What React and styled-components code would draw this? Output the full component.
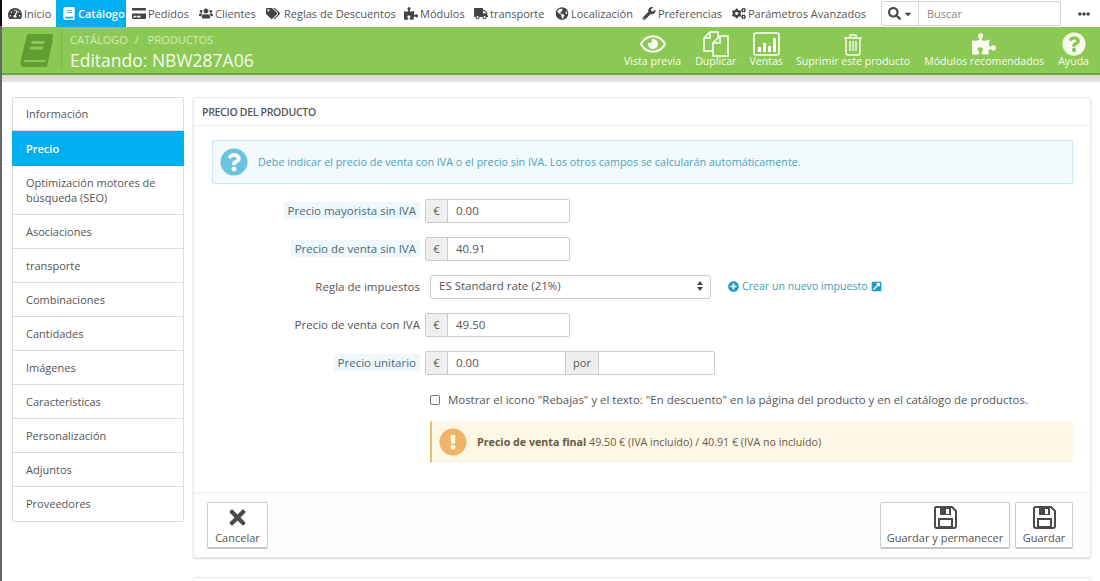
import React from "react";
import styled, { createGlobalStyle } from "styled-components";
import {
  FaTachometerAlt, FaBook, FaCreditCard, FaUsers, FaTags, FaPuzzlePiece, FaTruck, FaGlobeAmericas,
  FaWrench, FaCogs, FaSearch, FaCaretDown, FaEllipsisH, FaRegEye, FaQuestionCircle, FaTimes,
  FaPlusCircle, FaExternalLinkSquareAlt, FaExclamationCircle,
} from "react-icons/fa";

const GlobalStyle = createGlobalStyle`
  html, body { margin: 0; padding: 0; background: #fff; }
  body { font-family: "Open Sans", "Liberation Sans", sans-serif; font-size: 11px; color: #555; }
  * { box-sizing: border-box; }
`;

const Page = styled.div`
  width: 1100px;
  height: 581px;
  overflow: hidden;
  background: #fff;
  border-left: 2px solid #666;
  border-image: linear-gradient(#111 27px, #666 27px) 1;
`;

const TopBar = styled.nav`
  display: flex;
  align-items: stretch;
  height: 27px;
  padding-left: 6px;
  background: #fff;
`;

const NavItem = styled.a`
  display: flex;
  align-items: center;
  gap: ${(p) => p.$gap ?? 2}px;
  width: ${(p) => p.$w}px;
  margin-right: ${(p) => (p.$active ? 6 : 0)}px;
  padding-left: ${(p) => (p.$active ? 6 : 0)}px;
  font-size: 11px;
  white-space: nowrap;
  color: ${(p) => (p.$active ? "#fff" : "#555")};
  font-weight: ${(p) => (p.$active ? 600 : 400)};
  background: ${(p) => (p.$active ? "#00aff0" : "transparent")};
  svg { width: 14px; height: 13px; color: ${(p) => (p.$active ? "#fff" : "#444")}; flex: none; }
`;

const SearchBox = styled.div`
  display: flex;
  width: 180px;
  height: 25px;
  margin: 1px 0 0 15px;
  border: 1px solid #d5d5d0;
  border-radius: 2px;
`;

const SearchToggle = styled.div`
  display: flex;
  align-items: center;
  justify-content: center;
  gap: 2px;
  width: 37px;
  border-right: 1px solid #d5d5d0;
  color: #444;
  font-size: 13px;
  svg:last-child { font-size: 10px; }
`;

const SearchText = styled.div`
  display: flex;
  align-items: center;
  padding-left: 8px;
  color: #888;
`;

const Dots = styled.div`
  display: flex;
  align-items: center;
  margin-left: 17px;
  color: #444;
  font-size: 12px;
`;

const Header = styled.header`
  display: flex;
  justify-content: space-between;
  height: 48px;
  padding-left: 18px;
  background: #8bc954;
  border-bottom: 2px solid #6aa83c;
  color: #fff;
`;

const TitleArea = styled.div`
  display: flex;
  align-items: center;
`;

const BookMark = styled.div`
  display: flex;
  align-items: center;
  height: 38px;
  width: 42px;
  border-right: 1px solid #78b546;
`;

const TitleText = styled.div`
  padding: 4px 0 0 8px;
`;

const Crumbs = styled.div`
  display: flex;
  gap: 7px;
  font-size: 11px;
  line-height: 16px;
  color: #d3ecba;
  text-transform: uppercase;
  span:nth-child(2) { margin-right: 2px; }
`;

const Title = styled.h1`
  margin: 0;
  font-size: 17.5px;
  line-height: 25px;
  font-weight: 400;
  color: #f4faee;
`;

const Toolbar = styled.div`
  display: flex;
  padding-right: 11px;
`;

const ToolButton = styled.a`
  display: flex;
  flex-direction: column;
  align-items: center;
  margin-left: ${(p) => p.$gap}px;
  padding-top: 5px;
  font-size: 10.6px;
  font-weight: 500;
  line-height: 16px;
  white-space: nowrap;
  color: #f6fbf0;
`;

const ToolIcon = styled.div`
  display: flex;
  align-items: center;
  justify-content: center;
  height: 24px;
  margin-bottom: -3px;
  font-size: ${(p) => p.$size || 24}px;
`;

const Shade = styled.div`
  height: 7px;
  background: linear-gradient(#d8d8d2, #e6e6e2);
`;

const Content = styled.main`
  display: flex;
  align-items: flex-start;
  gap: 9px;
  padding: 15px 9px 0 10px;
`;

const Sidebar = styled.ul`
  flex: none;
  width: 172px;
  margin: 0;
  padding: 0;
  list-style: none;
  background: #fff;
  border: 1px solid #dcdcdc;
  border-radius: 2px;
`;

const SideItem = styled.li`
  display: flex;
  align-items: center;
  min-height: ${(p) => (p.$active ? 35 : p.$first ? 33 : 34)}px;
  padding: ${(p) => (p.$first ? 8 : 9)}px 13px 9px ${(p) => (p.$active ? 14 : 13)}px;
  line-height: 15px;
  font-size: 11px;
  color: ${(p) => (p.$active ? "#fff" : "#555")};
  font-weight: ${(p) => (p.$active ? 600 : 400)};
  background: ${(p) => (p.$active ? "#00aff0" : "transparent")};
  margin: ${(p) => (p.$active ? "0 -1px" : 0)};
  border-bottom: 1px solid ${(p) => (p.$last || p.$active ? "transparent" : "#dcdcdc")};
`;

const Main = styled.div`
  flex: 1;
  display: flex;
  flex-direction: column;
  gap: 19px;
`;

const Panel = styled.section`
  background: #fff;
  border: 1px solid #e8e8e8;
  border-radius: 3px;
  box-shadow: 0 1px 2px rgba(0, 0, 0, 0.16);
`;

const EmptyPanel = styled(Panel)`
  height: 60px;
`;

const PanelHead = styled.h2`
  margin: 0;
  height: 28px;
  padding: 0 8px;
  font-size: 10.5px;
  line-height: 28px;
  font-weight: 600;
  text-transform: uppercase;
  color: #555;
  border-bottom: 1px solid #eee;
  letter-spacing: -0.3px;
`;

const PanelBody = styled.div`
  display: flex;
  flex-direction: column;
  padding: 14px 17px 29px 18px;
`;

const InfoAlert = styled.div`
  display: flex;
  align-items: center;
  gap: 10px;
  height: 44px;
  margin-bottom: 15px;
  padding-left: 7px;
  background: #f2fafd;
  border: 1px solid #cde8f0;
  border-radius: 2px;
  color: #4aa2b8;
  font-size: 10.75px;
  svg { font-size: 28px; color: #6cc3e0; flex: none; }
`;

const FormRow = styled.div`
  display: flex;
  align-items: center;
  height: 24px;
  margin-bottom: ${(p) => p.$mb ?? 14}px;
`;

const LabelCol = styled.div`
  flex: none;
  width: 208px;
  padding-bottom: 2px;
  text-align: right;
  margin-right: ${(p) => (p.$wide ? 10 : 5)}px;
`;

const Label = styled.span`
  display: inline-block;
  padding: ${(p) => (p.$hint ? "0 4px" : 0)};
  line-height: 17px;
  color: ${(p) => (p.$hint ? "#4f6a75" : "#555")};
  background: ${(p) => (p.$hint ? "#eef7fb" : "transparent")};
  font-size: 11.5px;
`;

const InputGroup = styled.div`
  display: flex;
  height: 24px;
  border: 1px solid #ccc;
  border-radius: 2px;
  background: #fff;
`;

const Addon = styled.div`
  display: flex;
  align-items: center;
  justify-content: center;
  width: ${(p) => p.$w}px;
  padding-bottom: 2px;
  background: #efefef;
  border-right: 1px solid #ccc;
  border-left: ${(p) => (p.$mid ? "1px solid #ccc" : "none")};
  font-size: 11px;
  color: #555;
`;

const Field = styled.div`
  display: flex;
  align-items: center;
  width: ${(p) => p.$w}px;
  padding: 0 0 2px 8px;
  color: #555;
  font-size: 11.5px;
`;

const SelectBox = styled.div`
  display: flex;
  align-items: center;
  justify-content: space-between;
  width: 281px;
  height: 24px;
  padding: 0 7px 3px 8px;
  border: 1px solid #ccc;
  border-radius: 3px;
  font-size: 11.5px;
  color: #555;
`;

const AddLink = styled.a`
  display: flex;
  align-items: center;
  gap: 3px;
  margin: 0 0 2px 17px;
  color: #3f9db5;
  font-size: 10.6px;
  svg { color: #1f9cc9; font-size: 11px; flex: none; }
`;

const CheckRow = styled.label`
  display: flex;
  align-items: center;
  gap: 8px;
  margin: 15px 0 13px 218px;
  height: 18px;
  color: #555;
  font-size: 11.45px;
  white-space: nowrap;
`;

const CheckMark = styled.span`
  width: 10px;
  height: 10px;
  margin-top: 1px;
  border: 1px solid #777;
  border-radius: 2px;
  background: #fafafa;
`;

const WarnAlert = styled.div`
  display: flex;
  align-items: center;
  gap: 10px;
  height: 42px;
  margin-left: 218px;
  padding-left: 7px;
  background: #fdf7e6;
  border-left: 2px solid #e8bb73;
  border-radius: 2px;
  color: #6a5a42;
  font-size: 10.7px;
  svg { font-size: 28px; color: #f0b468; flex: none; }
  b { font-weight: 700; }
`;

const PanelFooter = styled.footer`
  display: flex;
  justify-content: space-between;
  padding: 9px 17px 8px 13px;
  background: #fbfdfe;
  border-top: 1px solid #eee;
`;

const ActionGroup = styled.div`
  display: flex;
  gap: 5px;
`;

const ActionButton = styled.button`
  display: flex;
  flex-direction: column;
  align-items: center;
  justify-content: flex-end;
  width: ${(p) => p.$w}px;
  height: 47px;
  padding: 0 0 1px;
  background: #fff;
  border: 1px solid #ccc;
  border-bottom: 2px solid #c4c4c4;
  border-radius: 2px;
  font-family: inherit;
  font-size: 11px;
  line-height: 17px;
  color: #555;
  svg { font-size: 23px; color: #4a4a4a; }
`;

const BookIcon = () => (
  <svg width="34" height="35" viewBox="0 0 34 35">
    <g fill="#5e9e33" stroke="#5e9e33" strokeWidth="2" strokeLinejoin="round">
      <path d="M8 2h24l-6 24H2z" />
      <path d="M2 27c-1 3-1 6 3 6h21l6-26-1 0-5 23H6c-3 0-3-3-4-3z" />
    </g>
    <path d="M12 8h13l-.8 3H11.2zM10.5 13.5h13l-.8 3H9.700z" fill="#8bc954" />
  </svg>
);

const CopyIcon = () => (
  <svg width="26" height="26" viewBox="0 0 26 26" fill="none" stroke="#fff" strokeWidth="1.5">
    <path d="M1 7l6-6h8v7l-5 4v8H1z" />
    <path d="M1 7h6V1" />
    <path d="M10 12l7-7h8v20H10z" fill="#8bc954" />
    <path d="M10 12h7V5" />
  </svg>
);

const ChartIcon = () => (
  <svg width="27" height="24" viewBox="0 0 27 24">
    <rect x="1" y="1" width="25" height="22" rx="2" fill="none" stroke="#fff" strokeWidth="1.6" />
    <path d="M5 15h3v5H5zM10 11h3v9h-3zM15 14h3v6h-3zM20 6h3v14h-3z" fill="#fff" />
  </svg>
);

const TrashIcon = () => (
  <svg width="20" height="23" viewBox="0 0 20 23" fill="none" stroke="#fff" strokeWidth="1.3">
    <path d="M1 5h18M7 5V2h6v3M3 5v15a2 2 0 0 0 2 2h10a2 2 0 0 0 2-2V5" />
    <path d="M7 8v10M10 8v10M13 8v10" />
  </svg>
);

const SaveIcon = () => (
  <svg width="23" height="23" viewBox="0 0 23 23">
    <path d="M2 1h16l4 4v15a2 2 0 0 1-2 2H3a2 2 0 0 1-2-2V2z" fill="none" stroke="#4a4a4a" strokeWidth="2" />
    <path d="M6 2h11v7H6z" fill="#4a4a4a" />
    <path d="M12 3h3v5h-3z" fill="#fff" />
    <path d="M5 13h13v8H5z" fill="none" stroke="#4a4a4a" strokeWidth="2" />
  </svg>
);

const navItems = [
  { w: 48, icon: FaTachometerAlt, text: "Inicio" },
  { w: 70, icon: FaBook, text: "Catálogo", active: true },
  { w: 67, icon: FaCreditCard, text: "Pedidos" },
  { w: 67, icon: FaUsers, text: "Clientes" },
  { w: 138, icon: FaTags, text: "Reglas de Descuentos", gap: 4 },
  { w: 70, icon: FaPuzzlePiece, text: "Módulos" },
  { w: 81, icon: FaTruck, text: "transporte" },
  { w: 87, icon: FaGlobeAmericas, text: "Localización" },
  { w: 90, icon: FaWrench, text: "Preferencias" },
  { w: 134, icon: FaCogs, text: "Parámetros Avanzados" },
];

const sideItems = [
  "Información", "Precio", "Optimización motores de búsqueda (SEO)", "Asociaciones", "transporte",
  "Combinaciones", "Cantidades", "Imágenes", "Características", "Personalización", "Adjuntos", "Proveedores",
];

export default function App() {
  return (
    <Page>
      <GlobalStyle />
      <TopBar>
        {navItems.map((item) => {
          const Icon = item.icon;
          return (
            <NavItem key={item.text} $w={item.w} $active={item.active} $gap={item.gap}>
              <Icon />
              {item.text}
            </NavItem>
          );
        })}
        <SearchBox>
          <SearchToggle><FaSearch /><FaCaretDown /></SearchToggle>
          <SearchText>Buscar</SearchText>
        </SearchBox>
        <Dots><FaEllipsisH /></Dots>
      </TopBar>
      <Header>
        <TitleArea>
          <BookMark><BookIcon /></BookMark>
          <TitleText>
            <Crumbs><span>Catálogo</span><span>/</span><span>Productos</span></Crumbs>
            <Title>Editando: NBW287A06</Title>
          </TitleText>
        </TitleArea>
        <Toolbar>
          <ToolButton $gap={0}><ToolIcon $size={26}><FaRegEye /></ToolIcon>Vista previa</ToolButton>
          <ToolButton $gap={14}><ToolIcon><CopyIcon /></ToolIcon>Duplicar</ToolButton>
          <ToolButton $gap={13}><ToolIcon><ChartIcon /></ToolIcon>Ventas</ToolButton>
          <ToolButton $gap={13}><ToolIcon><TrashIcon /></ToolIcon>Suprimir este producto</ToolButton>
          <ToolButton $gap={14}><ToolIcon><FaPuzzlePiece /></ToolIcon>Módulos recomendados</ToolButton>
          <ToolButton $gap={14}><ToolIcon><FaQuestionCircle /></ToolIcon>Ayuda</ToolButton>
        </Toolbar>
      </Header>
      <Shade />
      <Content>
        <Sidebar>
          {sideItems.map((text, i) => (
            <SideItem key={text} $active={text === "Precio"} $first={i === 0} $last={i === sideItems.length - 1}>{text}</SideItem>
          ))}
        </Sidebar>
        <Main>
          <Panel>
            <PanelHead>Precio del producto</PanelHead>
            <PanelBody>
              <InfoAlert>
                <FaQuestionCircle />
                Debe indicar el precio de venta con IVA o el precio sin IVA. Los otros campos se calcularán automáticamente.
              </InfoAlert>
              <FormRow>
                <LabelCol><Label $hint>Precio mayorista sin IVA</Label></LabelCol>
                <InputGroup><Addon $w={22}>€</Addon><Field $w={121}>0.00</Field></InputGroup>
              </FormRow>
              <FormRow>
                <LabelCol><Label $hint>Precio de venta sin IVA</Label></LabelCol>
                <InputGroup><Addon $w={22}>€</Addon><Field $w={121}>40.91</Field></InputGroup>
              </FormRow>
              <FormRow>
                <LabelCol $wide><Label>Regla de impuestos</Label></LabelCol>
                <SelectBox>
                  ES Standard rate (21%)
                  <svg width="6" height="10" viewBox="0 0 6 10" fill="#444"><path d="M3 0l3 4H0zM3 10L0 6h6z" /></svg>
                </SelectBox>
                <AddLink><FaPlusCircle />Crear un nuevo impuesto<FaExternalLinkSquareAlt /></AddLink>
              </FormRow>
              <FormRow>
                <LabelCol><Label>Precio de venta con IVA</Label></LabelCol>
                <InputGroup><Addon $w={22}>€</Addon><Field $w={121}>49.50</Field></InputGroup>
              </FormRow>
              <FormRow $mb={0}>
                <LabelCol><Label $hint>Precio unitario</Label></LabelCol>
                <InputGroup>
                  <Addon $w={22}>€</Addon>
                  <Field $w={117}>0.00</Field>
                  <Addon $w={34} $mid>por</Addon>
                  <Field $w={115} />
                </InputGroup>
              </FormRow>
              <CheckRow>
                <CheckMark />
                Mostrar el icono "Rebajas" y el texto: "En descuento" en la página del producto y en el catálogo de productos.
              </CheckRow>
              <WarnAlert>
                <FaExclamationCircle />
                <span><b>Precio de venta final</b> 49.50 € (IVA incluído) / 40.91 € (IVA no incluído)</span>
              </WarnAlert>
            </PanelBody>
            <PanelFooter>
              <ActionButton $w={61}><FaTimes />Cancelar</ActionButton>
              <ActionGroup>
                <ActionButton $w={130}><SaveIcon />Guardar y permanecer</ActionButton>
                <ActionButton $w={58}><SaveIcon />Guardar</ActionButton>
              </ActionGroup>
            </PanelFooter>
          </Panel>
          <EmptyPanel />
        </Main>
      </Content>
    </Page>
  );
}
